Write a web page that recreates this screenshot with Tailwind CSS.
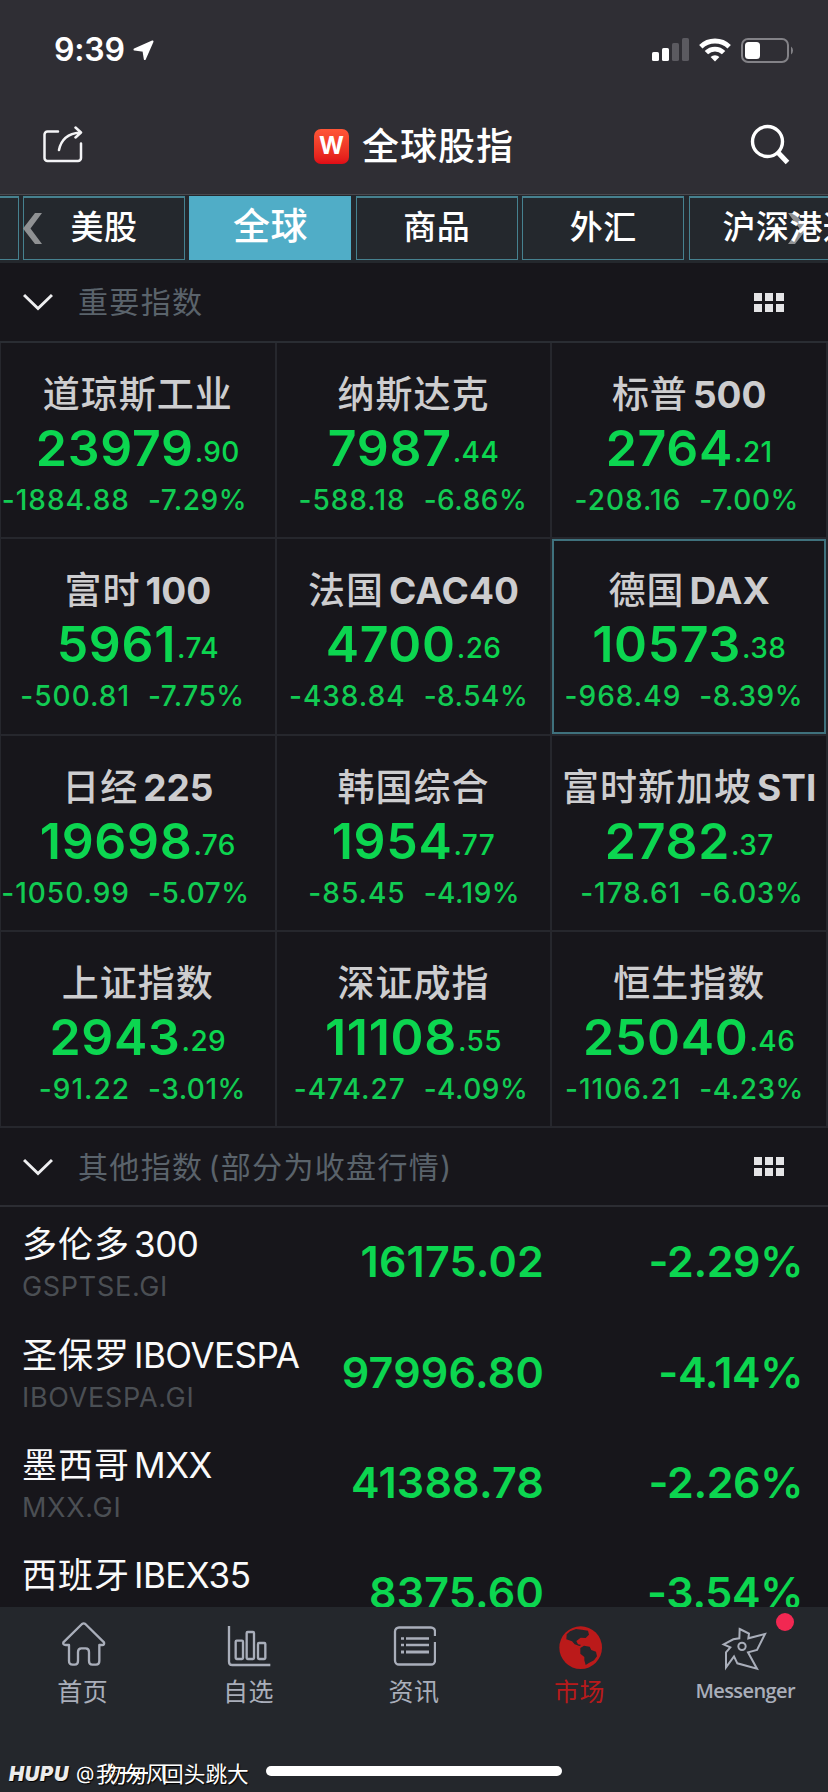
<!DOCTYPE html>
<html lang="zh-CN">
<head>
    <meta charset="UTF-8">
    <meta name="viewport" content="width=device-width, initial-scale=1.0">
    <title>全球股指</title>
    <script src="https://cdn.jsdelivr.net/npm/@tailwindcss/browser@4"></script>
</head>
<body class="bg-[#17161b] font-['Inter','Noto_Sans_CJK_SC',sans-serif]">
    <div class="w-[828px] h-[1792px] flex flex-col overflow-hidden relative">
        <!-- Status bar -->
        <div class="h-[98px] shrink-0 bg-[#2f2e34] flex items-center justify-between pl-[54px] pr-[34px] pt-[2px] text-white">
            <div class="flex items-center gap-[8px]">
                <span class="text-[32px] leading-[40px] font-semibold tracking-[-0.2px]">9:39</span>
                <svg class="w-[21px] h-[21px]" viewBox="0 0 21 21" fill="#fff" stroke="#fff" stroke-width="2" stroke-linejoin="round"><path d="M19.5 1.5 1.5 9.5 10.5 10.8 11.8 19Z"/></svg>
            </div>
            <div class="flex items-center">
                <svg class="w-[37px] h-[24px]" viewBox="0 0 37 24">
                    <rect x="0" y="14" width="7" height="9" rx="1.6" fill="#fff"/>
                    <rect x="10" y="10" width="7" height="13" rx="1.6" fill="#fff"/>
                    <rect x="20" y="5" width="7" height="18" rx="1.6" fill="#5b5a60"/>
                    <rect x="30" y="0" width="7" height="23" rx="1.6" fill="#5b5a60"/>
                </svg>
                <svg class="w-[32px] h-[24px] ml-[10px]" viewBox="0 0 32 24" fill="none" stroke="#fff" stroke-width="4.8">
                    <path d="M1.8 8.8a20.3 20.3 0 0 1 28.4 0"/>
                    <path d="M7.4 14.6a12.2 12.2 0 0 1 17.2 0"/>
                    <path d="M16 23.5 11.6 19a6.3 6.3 0 0 1 8.8 0Z" fill="#fff" stroke="none"/>
                </svg>
                <svg class="w-[53px] h-[25px] ml-[10px]" viewBox="0 0 53 25">
                    <rect x="1" y="1" width="46" height="23" rx="6" fill="none" stroke="#838287" stroke-width="2"/>
                    <rect x="4" y="4" width="15" height="17" rx="3.5" fill="#fff"/>
                    <path d="M50 8.5a5 5 0 0 1 0 8Z" fill="#838287"/>
                </svg>
            </div>
        </div>

        <!-- Title bar -->
        <div class="h-[97px] shrink-0 bg-[#2f2e34] border-b border-[#4a494e] flex items-start justify-between pl-[43px] pr-[38px]">
            <svg class="w-[40px] h-[38px] mt-[28px]" viewBox="0 0 40 38" fill="none" stroke="#f4f4f6" stroke-width="2.5" stroke-linecap="round" stroke-linejoin="round">
                <path d="M15 5.5H4.5a3 3 0 0 0-3 3V32a3 3 0 0 0 3 3H35a3 3 0 0 0 3-3V17.5"/>
                <path d="M16 24C18 14 25 7.5 37 6.5M32.5 1.5 38 6.5l-5.5 5"/>
            </svg>
            <div class="flex items-center mt-[24px] pr-[5px]">
                <div class="w-[35px] h-[35px] rounded-[7px] bg-linear-to-b from-[#ff5637] to-[#e00a16] flex items-center justify-center text-white text-[24px] leading-none font-bold">W</div>
                <h1 class="ml-[13px] text-[37px] leading-[48px] tracking-[1px] font-medium text-white relative top-px">全球股指</h1>
            </div>
            <svg class="w-[40px] h-[41px] mt-[26px]" viewBox="0 0 40 41" fill="none" stroke="#fff">
                <circle cx="17.5" cy="17.5" r="15" stroke-width="3.4"/>
                <path d="m28 28.5 9.5 10" stroke-width="5"/>
            </svg>
        </div>

        <!-- Market tabs -->
        <div class="relative h-[68px] shrink-0 bg-[#24282d] overflow-hidden">
            <div class="flex gap-[4.4px] pt-px -ml-[143.4px] w-[1200px] text-[33px] leading-[58px] tracking-[0.5px] font-medium text-white text-center">
                <div class="w-[162px] h-[64px] border border-t-2 border-[#46818f]"></div>
                <div class="w-[162px] h-[64px] border border-t-2 border-[#46818f]">美股</div>
                <div class="w-[162px] h-[64px] bg-[#50adc7] text-[37px] leading-[61px]">全球</div>
                <div class="w-[162px] h-[64px] border border-t-2 border-[#46818f]">商品</div>
                <div class="w-[162px] h-[64px] border border-t-2 border-[#46818f]">外汇</div>
                <div class="w-[202px] h-[64px] border border-t-2 border-[#46818f] relative z-10">沪深港通</div>
            </div>
            <svg class="absolute left-[23px] top-[18px] w-[19px] h-[31px]" viewBox="0 0 19 31" fill="#8f9193"><path d="M12 0h7L7.5 15.5 19 31h-7L0 15.5Z"/></svg>
            <svg class="absolute left-[788px] top-[18px] w-[19px] h-[31px]" viewBox="0 0 19 31" fill="#8f9193"><path d="M7 0H0l11.5 15.5L0 31h7l12-15.5Z"/></svg>
        </div>

        <!-- Important indices -->
        <div class="h-[80px] shrink-0 border-b-2 border-[#2a2d33] flex items-center pl-[23px] pr-[44px]">
            <svg class="w-[30px] h-[18px]" viewBox="0 0 30 18" fill="none" stroke="#eeeef0" stroke-width="3"><path d="m1 2 14 13.5L29 2"/></svg>
            <h2 class="ml-[25px] flex-1 text-[30px] leading-[40px] tracking-[1.35px] text-[#5a636b]">重要指数</h2>
            <svg class="w-[30px] h-[19px]" viewBox="0 0 30 19" fill="#e4e4e6"><path d="M0 0h8v8H0zM11 0h8v8h-8zM22 0h8v8h-8zM0 11h8v8H0zM11 11h8v8h-8zM22 11h8v8h-8z"/></svg>
        </div>
        <div id="indexGrid" class="shrink-0 grid grid-cols-3 border-l border-[#26272d]"></div>

        <!-- Other indices -->
        <div class="h-[79px] shrink-0 border-b-2 border-[#2c2d33] flex items-center pl-[23px] pr-[44px]">
            <svg class="w-[30px] h-[18px]" viewBox="0 0 30 18" fill="none" stroke="#eeeef0" stroke-width="3"><path d="m1 2 14 13.5L29 2"/></svg>
            <h2 class="ml-[25px] flex-1 text-[30px] leading-[40px] tracking-[1.35px] text-[#5a636b]">其他指数<span class="ml-[5px]">(</span>部分为收盘行情)</h2>
            <svg class="w-[30px] h-[19px]" viewBox="0 0 30 19" fill="#e4e4e6"><path d="M0 0h8v8H0zM11 0h8v8h-8zM22 0h8v8h-8zM0 11h8v8H0zM11 11h8v8h-8zM22 11h8v8h-8z"/></svg>
        </div>
        <div id="indexList" class="flex-1 min-h-0 overflow-hidden"></div>

        <!-- Bottom navigation -->
        <nav class="relative h-[185px] shrink-0 bg-[#24272c] text-[#a9aeba]">
            <div class="grid grid-cols-5 text-[25px] leading-[28px] tracking-[0.5px]">
                <div class="flex flex-col items-center pt-[16px] gap-[11px]">
                    <svg class="w-[44px] h-[44px] overflow-visible" viewBox="182 99 132 132" fill="none" stroke="#a9aeba" stroke-width="7" stroke-linejoin="round"><path d="M245 102q5-4 10 0l56 55q2 8-5 8h-9v48q0 11-10 11h-11q-10 0-10-11v-27q0-11-10-11h-13q-10 0-10 11v27q0 11-10 11h-6q-11 0-11-11v-48h-10q-9 0-7-8Z"/></svg>
                    <span>首页</span>
                </div>
                <div class="flex flex-col items-center pt-[16px] gap-[11px]">
                    <svg class="w-[44px] h-[44px] overflow-visible" viewBox="679 99 132 132" fill="none" stroke="#a9aeba" stroke-width="7"><path d="M688 108v107q0 10 10 10h114"/><rect x="708" y="152" width="22" height="55" rx="3"/><rect x="741" y="126" width="22" height="81" rx="3"/><rect x="775" y="159" width="22" height="48" rx="3"/></svg>
                    <span>自选</span>
                </div>
                <div class="flex flex-col items-center pt-[16px] gap-[11px]">
                    <svg class="w-[44px] h-[44px]" viewBox="0 0 44 44" fill="none" stroke="#a9aeba" stroke-width="2.3"><path d="M43 13V8.500a4 4 0 0 0-4-4H7a4 4 0 0 0-4 4v29a4 4 0 0 0 4 4h32a4 4 0 0 0 4-4V19"/><path d="M9 15.500h3M9 22h3M14 15.500h23M14 22h23"/><path d="M9 29h3M14 29h23" stroke-width="3.2"/></svg>
                    <span>资讯</span>
                </div>
                <div class="flex flex-col items-center pt-[16px] gap-[11px] text-[#b81a1b]">
                    <svg class="w-[44px] h-[44px] overflow-visible" viewBox="431 99 132 132"><circle cx="499" cy="173" r="64" fill="#bb1a1a"/><path d="M457 133 467 124 485 117 503 119 521 122 524 134 514 144 499 143 486 153 491 163 501 165 495 168 481 163 473 154 456 148ZM498 174 509 167 526 170 531 180 545 185 548 199 539 211 525 218 514 225 510 211 510 201 498 191Z" fill="#24272c"/></svg>
                    <span>市场</span>
                </div>
                <div class="flex flex-col items-center pt-[16px] gap-[11px]">
                    <svg class="w-[44px] h-[44px] overflow-visible" viewBox="927 99 132 132" fill="none" stroke="#a9aeba" stroke-width="6"><path d="m977 117 28 14-2 14 50-13-24 48-27 7 27 49-59-16-10-21-24 33v-45l13-15-20-9 29-15 18-3Z"/><circle cx="984" cy="169" r="11"/></svg>
                    <span class="text-[20px] font-['Open_Sans'] font-semibold tracking-[-0.6px] relative -top-px">Messenger</span>
                </div>
            </div>
            <div class="absolute left-[776px] top-[6px] w-[18px] h-[18px] rounded-full bg-[#f22852]"></div>
            <div class="absolute left-[266px] top-[159px] w-[296px] h-[10px] rounded-full bg-white"></div>
            <!-- Forum watermark -->
            <div class="absolute left-[9px] top-[153px] flex items-center text-[21.7px] leading-[28px] text-white [text-shadow:1px_1px_1px_#000]">
                <span class="w-[67px] text-[20px] font-black italic text-[#ebebeb] tracking-[0.8px]">HUPU</span>
                <span class="w-[20px] text-[19px]">@</span>
                <span class="w-[9px]">我</span><span class="w-[20px]">勿</span><span class="w-[21px]">匆</span><span class="w-[16px]">风</span><span>回头跳大</span>
            </div>
            <div class="absolute left-[120px] top-[165px] w-[28px] h-[2px] bg-white"></div>
        </nav>
    </div>

    <script>
        // name (Chinese part, latin part), integer, decimals, change, percent
        const indices = [
            ['道琼斯工业', '', '23979', '.90', '-1884.88', '-7.29%'],
            ['纳斯达克', '', '7987', '.44', '-588.18', '-6.86%'],
            ['标普', '500', '2764', '.21', '-208.16', '-7.00%'],
            ['富时', '100', '5961', '.74', '-500.81', '-7.75%'],
            ['法国', 'CAC40', '4700', '.26', '-438.84', '-8.54%'],
            ['德国', 'DAX', '10573', '.38', '-968.49', '-8.39%'],
            ['日经', '225', '19698', '.76', '-1050.99', '-5.07%'],
            ['韩国综合', '', '1954', '.77', '-85.45', '-4.19%'],
            ['富时新加坡', 'STI', '2782', '.37', '-178.61', '-6.03%'],
            ['上证指数', '', '2943', '.29', '-91.22', '-3.01%'],
            ['深证成指', '', '11108', '.55', '-474.27', '-4.09%'],
            ['恒生指数', '', '25040', '.46', '-1106.21', '-4.23%']
        ];
        const others = [
            ['多伦多', '300', 'GSPTSE.GI', '16175.02', '-2.29%'],
            ['圣保罗', 'IBOVESPA', 'IBOVESPA.GI', '97996.80', '-4.14%'],
            ['墨西哥', 'MXX', 'MXX.GI', '41388.78', '-2.26%'],
            ['西班牙', 'IBEX35', 'IBEX35.GI', '8375.60', '-3.54%']
        ];

        document.getElementById('indexGrid').innerHTML = indices.map(([cn, en, int, dec, chg, pct]) => `
            <div class="relative h-[196.3px] pt-[32px] border-r-2 border-b-2 border-[#26272d] whitespace-nowrap">
                ${en === 'DAX' ? '<div class="absolute inset-0 border-2 border-[#3f717d]"></div>' : ''}
                <div class="flex justify-center text-[37px] leading-[40px] text-[#cdcdcf]">
                    <span class="font-medium tracking-[1px]">${cn}</span>${en ? `<span class="ml-[5px] font-bold">${en}</span>` : ''}
                </div>
                <div class="mt-[8px] flex justify-center text-[#0cd650] font-semibold text-[50px] leading-[50px]">
                    <span class="tracking-[0.7px]">${int}</span><span class="ml-px text-[28px] leading-[59px] h-[50px] font-medium tracking-[0.4px]">${dec}</span>
                </div>
                <div class="mt-[11px] flex text-[28px] leading-[32px] font-medium text-[#12cb53]">
                    <span class="w-[129px] flex justify-end tracking-[1px]">${chg}</span><span class="ml-[18px] tracking-[0.5px]">${pct}</span>
                </div>
            </div>`).join('');

        document.getElementById('indexList').innerHTML = others.map(([cn, en, code, price, pct]) => `
            <div class="h-[110.4px] flex items-start pl-[22px] pr-[25px] whitespace-nowrap">
                <div class="w-[300px] pt-[17px]">
                    <div class="text-[35px] leading-[40px] text-[#fafafa]"><span class="tracking-[1px]">${cn}</span><span class="ml-[4px] tracking-[-0.5px]">${en}</span></div>
                    <div class="mt-[7px] text-[27px] leading-[32px] tracking-[0.7px] text-[#4b4f54]">${code}</div>
                </div>
                <div class="w-[222px] pt-[28px] text-right text-[43px] leading-[52px] font-semibold tracking-[0.2px] text-[#0cd650]">${price}</div>
                <div class="flex-1 pt-[28px] text-right text-[43px] leading-[52px] font-semibold tracking-[-0.4px] text-[#0cd650]">${pct}</div>
            </div>`).join('');
    </script>
</body>
</html>
